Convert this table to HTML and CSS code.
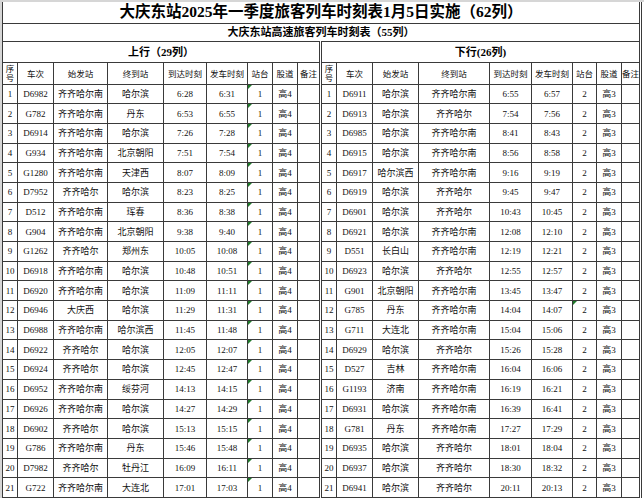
FILE: index.html
```html
<!DOCTYPE html>
<html lang="zh-CN">
<head>
<meta charset="utf-8">
<title>大庆东站2025年一季度旅客列车时刻表</title>
<link rel="stylesheet" href="styles.css">
</head>
<body>
<div class="sheet">
<table class="grid">
<colgroup>
<col class="w15"><col class="w36"><col class="w54"><col class="w56"><col class="w43"><col class="w41"><col class="w25"><col class="w25"><col class="w23">
<col class="w16"><col class="w36"><col class="w46"><col class="w71"><col class="w42"><col class="w41"><col class="w24"><col class="w25"><col class="w19">
</colgroup>
<tbody>
<tr class="r-title"><td colspan="18" class="title end">大庆东站2025年一季度旅客列车时刻表1月5日实施（62列）</td></tr>
<tr class="r-sub"><td colspan="18" class="sub end">大庆东站高速旅客列车时刻表（55列）</td></tr>
<tr class="r-dir"><td colspan="9" class="dir">上行（29列）</td><td colspan="9" class="dir mid end">下行(26列)</td></tr>
<tr class="r-head">
<td class="hd wrap">序号</td><td class="hd">车次</td><td class="hd">始发站</td><td class="hd">终到站</td><td class="hd">到达时刻</td><td class="hd">发车时刻</td><td class="hd">站台</td><td class="hd">股道</td><td class="hd">备注</td>
<td class="hd wrap mid">序号</td><td class="hd">车次</td><td class="hd">始发站</td><td class="hd">终到站</td><td class="hd">到达时刻</td><td class="hd">发车时刻</td><td class="hd">站台</td><td class="hd">股道</td><td class="hd end">备注</td>
</tr>
<tr><td>1</td><td>D6982</td><td>齐齐哈尔南</td><td>哈尔滨</td><td>6:28</td><td>6:31</td><td class="tri">1</td><td>高4</td><td></td><td class="mid">1</td><td>D6911</td><td>哈尔滨</td><td>齐齐哈尔南</td><td>6:55</td><td>6:57</td><td>2</td><td>高3</td><td class="end"></td></tr>
<tr><td>2</td><td>G782</td><td>齐齐哈尔南</td><td>丹东</td><td>6:53</td><td>6:55</td><td class="tri">1</td><td>高4</td><td></td><td class="mid">2</td><td>D6913</td><td>哈尔滨</td><td>齐齐哈尔</td><td>7:54</td><td>7:56</td><td>2</td><td>高3</td><td class="end"></td></tr>
<tr><td>3</td><td>D6914</td><td>齐齐哈尔南</td><td>哈尔滨</td><td>7:26</td><td>7:28</td><td class="tri">1</td><td>高4</td><td></td><td class="mid">3</td><td>D6985</td><td>哈尔滨</td><td>齐齐哈尔南</td><td>8:41</td><td>8:43</td><td>2</td><td>高3</td><td class="end"></td></tr>
<tr><td>4</td><td>G934</td><td>齐齐哈尔南</td><td>北京朝阳</td><td>7:51</td><td>7:54</td><td class="tri">1</td><td>高4</td><td></td><td class="mid">4</td><td>D6915</td><td>哈尔滨</td><td>齐齐哈尔南</td><td>8:56</td><td>8:58</td><td>2</td><td>高3</td><td class="end"></td></tr>
<tr><td>5</td><td>G1280</td><td>齐齐哈尔南</td><td>天津西</td><td>8:07</td><td>8:09</td><td class="tri">1</td><td>高4</td><td></td><td class="mid">5</td><td>D6917</td><td>哈尔滨西</td><td>齐齐哈尔南</td><td>9:16</td><td>9:19</td><td>2</td><td>高3</td><td class="end"></td></tr>
<tr><td>6</td><td>D7952</td><td>齐齐哈尔</td><td>哈尔滨</td><td>8:23</td><td>8:25</td><td class="tri">1</td><td>高4</td><td></td><td class="mid">6</td><td>D6919</td><td>哈尔滨</td><td>齐齐哈尔</td><td>9:45</td><td>9:47</td><td>2</td><td>高3</td><td class="end"></td></tr>
<tr><td>7</td><td>D512</td><td>齐齐哈尔南</td><td>珲春</td><td>8:36</td><td>8:38</td><td class="tri">1</td><td>高4</td><td></td><td class="mid">7</td><td>D6901</td><td>哈尔滨</td><td>齐齐哈尔</td><td>10:43</td><td>10:45</td><td>2</td><td>高3</td><td class="end"></td></tr>
<tr><td>8</td><td>G904</td><td>齐齐哈尔南</td><td>北京朝阳</td><td>9:38</td><td>9:40</td><td class="tri">1</td><td>高4</td><td></td><td class="mid">8</td><td>D6921</td><td>哈尔滨</td><td>齐齐哈尔南</td><td>12:08</td><td>12:10</td><td>2</td><td>高3</td><td class="end"></td></tr>
<tr><td>9</td><td>G1262</td><td>齐齐哈尔</td><td>郑州东</td><td>10:05</td><td>10:08</td><td class="tri">1</td><td>高4</td><td></td><td class="mid">9</td><td>D551</td><td>长白山</td><td>齐齐哈尔南</td><td>12:19</td><td>12:21</td><td>2</td><td>高3</td><td class="end"></td></tr>
<tr><td>10</td><td>D6918</td><td>齐齐哈尔南</td><td>哈尔滨</td><td>10:48</td><td>10:51</td><td class="tri">1</td><td>高4</td><td></td><td class="mid">10</td><td>D6923</td><td>哈尔滨</td><td>齐齐哈尔</td><td>12:55</td><td>12:57</td><td>2</td><td>高3</td><td class="end"></td></tr>
<tr><td>11</td><td>D6920</td><td>齐齐哈尔南</td><td>哈尔滨</td><td>11:09</td><td>11:11</td><td class="tri">1</td><td>高4</td><td></td><td class="mid">11</td><td>G901</td><td>北京朝阳</td><td>齐齐哈尔南</td><td>13:45</td><td>13:47</td><td>2</td><td>高3</td><td class="end"></td></tr>
<tr><td>12</td><td>D6946</td><td>大庆西</td><td>哈尔滨</td><td>11:29</td><td>11:31</td><td class="tri">1</td><td>高4</td><td></td><td class="mid">12</td><td>G785</td><td>丹东</td><td>齐齐哈尔南</td><td>14:04</td><td>14:07</td><td class="tri">2</td><td>高3</td><td class="end"></td></tr>
<tr><td>13</td><td>D6988</td><td>齐齐哈尔南</td><td>哈尔滨西</td><td>11:45</td><td>11:48</td><td class="tri">1</td><td>高4</td><td></td><td class="mid">13</td><td>G711</td><td>大连北</td><td>齐齐哈尔南</td><td>15:04</td><td>15:06</td><td>2</td><td>高3</td><td class="end"></td></tr>
<tr><td>14</td><td>D6922</td><td>齐齐哈尔</td><td>哈尔滨</td><td>12:05</td><td>12:07</td><td class="tri">1</td><td>高4</td><td></td><td class="mid">14</td><td>D6929</td><td>哈尔滨</td><td>齐齐哈尔</td><td>15:26</td><td>15:28</td><td>2</td><td>高3</td><td class="end"></td></tr>
<tr><td>15</td><td>D6924</td><td>齐齐哈尔</td><td>哈尔滨</td><td>12:45</td><td>12:47</td><td class="tri">1</td><td>高4</td><td></td><td class="mid">15</td><td>D527</td><td>吉林</td><td>齐齐哈尔南</td><td>16:04</td><td>16:06</td><td>2</td><td>高3</td><td class="end"></td></tr>
<tr><td>16</td><td>D6952</td><td>齐齐哈尔南</td><td>绥芬河</td><td>14:13</td><td>14:15</td><td class="tri">1</td><td>高4</td><td></td><td class="mid">16</td><td>G1193</td><td>济南</td><td>齐齐哈尔南</td><td>16:19</td><td>16:21</td><td>2</td><td>高3</td><td class="end"></td></tr>
<tr><td>17</td><td>D6926</td><td>齐齐哈尔南</td><td>哈尔滨</td><td>14:27</td><td>14:29</td><td class="tri">1</td><td>高4</td><td></td><td class="mid">17</td><td>D6931</td><td>哈尔滨</td><td>齐齐哈尔南</td><td>16:39</td><td>16:41</td><td>2</td><td>高3</td><td class="end"></td></tr>
<tr><td>18</td><td>D6902</td><td>齐齐哈尔</td><td>哈尔滨</td><td>15:13</td><td>15:15</td><td class="tri">1</td><td>高4</td><td></td><td class="mid">18</td><td>G781</td><td>丹东</td><td>齐齐哈尔南</td><td>17:27</td><td>17:29</td><td>2</td><td>高3</td><td class="end"></td></tr>
<tr><td>19</td><td>G786</td><td>齐齐哈尔南</td><td>丹东</td><td>15:46</td><td>15:48</td><td class="tri">1</td><td>高4</td><td></td><td class="mid">19</td><td>D6935</td><td>哈尔滨</td><td>齐齐哈尔</td><td>18:01</td><td>18:04</td><td>2</td><td>高3</td><td class="end"></td></tr>
<tr><td>20</td><td>D7982</td><td>齐齐哈尔</td><td>牡丹江</td><td>16:09</td><td>16:11</td><td class="tri">1</td><td>高4</td><td></td><td class="mid">20</td><td>D6937</td><td>哈尔滨</td><td>齐齐哈尔</td><td>18:30</td><td>18:32</td><td>2</td><td>高3</td><td class="end"></td></tr>
<tr><td>21</td><td>G722</td><td>齐齐哈尔南</td><td>大连北</td><td>17:01</td><td>17:03</td><td class="tri">1</td><td>高4</td><td></td><td class="mid">21</td><td>D6941</td><td>哈尔滨</td><td>齐齐哈尔</td><td>20:11</td><td>20:13</td><td>2</td><td>高3</td><td class="end"></td></tr>
</tbody>
</table>
</div>
</body>
</html>
```
FILE: styles.css
```css
html, body {
  margin: 0;
  padding: 0;
  background: #ffffff;
}

.sheet {
  width: 642px;
  border-top: 2px solid #d6d6d6;
  border-left: 2px solid #d6d6d6;
}

.grid {
  border-collapse: collapse;
  table-layout: fixed;
  width: 639px;
}

.w15 { width: 15px; }
.w16 { width: 16px; }
.w19 { width: 19px; }
.w23 { width: 23px; }
.w24 { width: 24px; }
.w25 { width: 25px; }
.w36 { width: 36px; }
.w41 { width: 41px; }
.w42 { width: 42px; }
.w43 { width: 43px; }
.w46 { width: 46px; }
.w54 { width: 54px; }
.w56 { width: 56px; }
.w71 { width: 71px; }

.grid td {
  border: 1px solid #3a3a3a;
  padding: 0;
  text-align: center;
  vertical-align: middle;
  font-family: "Liberation Serif", "Noto Sans CJK SC", serif;
  font-size: 9px;
  line-height: 10px;
  color: #111;
  white-space: nowrap;
  overflow: hidden;
}

.grid tr { height: 19.7px; }
.grid .r-title { height: 21px; }
.grid .r-sub { height: 18px; }
.grid .r-dir { height: 21px; }
.grid .r-head { height: 22px; }

.grid td.title {
  font-family: "Liberation Serif", "Noto Sans CJK SC", serif;
  font-size: 15.5px;
  font-weight: bold;
  line-height: 18px;
  color: #000;
  border-top: none;
}

.grid td.sub {
  font-size: 11px;
  font-weight: bold;
  line-height: 14px;
  color: #000;
}

.grid td.dir {
  font-size: 11px;
  font-weight: bold;
  line-height: 14px;
  color: #000;
}

.grid td.hd {
  font-family: "Noto Sans CJK SC", sans-serif;
  font-size: 8.5px;
  line-height: 10px;
}

.grid td.wrap {
  white-space: normal;
  line-height: 9px;
}

.grid td.mid {
  border-left: 3px double #3a3a3a;
}

.grid td.end {
  border-right: 3px double #3a3a3a;
}

.grid td.tri {
  position: relative;
}

.grid td.tri::before {
  content: "";
  position: absolute;
  left: 0;
  top: 0;
  width: 0;
  height: 0;
  border-top: 4px solid #1f7a2a;
  border-right: 4px solid transparent;
}
```
